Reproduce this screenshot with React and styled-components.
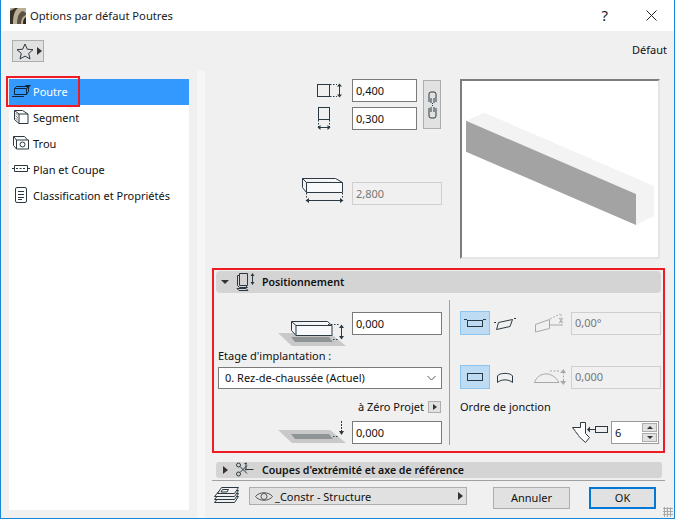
import React from "react";
import styled, { createGlobalStyle } from "styled-components";

const Global = createGlobalStyle`
  html, body { margin: 0; padding: 0; background: #f0f0f0; }
  * { box-sizing: border-box; }
`;

const INK = "#2b3a42";

const Logo = () => (
  <svg width="16" height="16" viewBox="0 0 16 16">
    <rect width="16" height="16" fill="#b9ae98" />
    <path d="M0 16V3L5 0h3C4 3 3 9 3 16z" fill="#3a3226" />
    <path d="M7 16C7 9 9 4 13 3l3 2v2c-3 1-5 4-5 9z" fill="#5c5140" />
    <path d="M13 16c0-4 1-6 3-7v7z" fill="#2f2a20" />
  </svg>
);

const Star = () => (
  <svg width="18" height="17" viewBox="0 0 18 17">
    <path d="M9 1l2.300 5.200 5.700.5-4.300 3.700 1.300 5.600L9 13.100 4 16l1.300-5.600L1 6.700l5.700-.5z" fill="none" stroke={INK} />
  </svg>
);

const BeamIcon = () => (
  <svg width="19" height="12" viewBox="0 0 19 12">
    <g fill="none" stroke="#10243a">
      <path d="M2.500 3.500h12v6h-12zM2.500 3.500l2-2h11M14.500 3.500l2-2v5l-2 3" />
      <path d="M0 11.500h12" />
    </g>
    <path d="M13 0h6l-3 4z" fill="#10243a" />
  </svg>
);

const SegmentIcon = () => (
  <svg width="15" height="14" viewBox="0 0 15 14">
    <path d="M.500.500h8l5.500 3.500v9.500H5l-4.500-4zM5 13.500V4h9M5 4L.500.500" fill="none" stroke={INK} />
    <path d="M1.500 3l2.500 2.500M1.500 5.500L4 8M1.500 8L4 10.500" stroke="#777" />
  </svg>
);

const HoleIcon = () => (
  <svg width="16" height="14" viewBox="0 0 16 14">
    <path d="M.500.500h11l3 3.500M.500.500v9l3 3.500h12V4h-12v9M.500.500L3.500 4" fill="none" stroke={INK} />
    <circle cx="9.500" cy="8.500" r="2.500" fill="none" stroke={INK} />
  </svg>
);

const PlanIcon = () => (
  <svg width="18" height="8" viewBox="0 0 18 8">
    <path d="M2.500.500h13v6h-13zM0 3.500h2.500M15.500 3.500H18" fill="none" stroke={INK} />
    <path d="M4 3.500h10" stroke={INK} strokeDasharray="2 1.500" />
  </svg>
);

const SheetIcon = () => (
  <svg width="12" height="16" viewBox="0 0 12 16">
    <rect x="0.500" y="0.500" width="11" height="15" rx="1.500" fill="none" stroke={INK} />
    <path d="M3 4.500h6M3 7.500h6M3 10.500h6M3 12.500h4" stroke={INK} />
  </svg>
);

const HeightDim = () => (
  <svg width="26" height="15" viewBox="0 0 26 15">
    <rect x="0.500" y="1.500" width="12" height="12" fill="none" stroke={INK} />
    <path d="M13 1.500h7M13 13.500h7" stroke={INK} strokeDasharray="1.500 1.500" />
    <path d="M22.500 2v11" stroke={INK} />
    <path d="M20 3.500l2.500-3 2.500 3zM20 11.500l2.500 3 2.500-3z" fill={INK} />
  </svg>
);

const WidthDim = () => (
  <svg width="14" height="23" viewBox="0 0 14 23">
    <rect x="1.500" y="0.500" width="11" height="12" fill="none" stroke={INK} />
    <path d="M1.500 13v7M12.500 13v7" stroke={INK} strokeDasharray="1.500 1.500" />
    <path d="M2 20.500h10" stroke={INK} />
    <path d="M3.500 18l-3 2.500 3 2.500zM10.500 18l3 2.500-3 2.500z" fill={INK} />
  </svg>
);

const LengthDim = () => (
  <svg width="42" height="28" viewBox="0 0 42 28">
    <path d="M4.500 5.500h36v10h-36zM.500 1.500h33l7 4M.500 1.500v9l4 5M.500 1.500l4 4" fill="#f8f9fb" stroke={INK} />
    <path d="M4.500 16v6M40.500 16v6" stroke={INK} strokeDasharray="1.500 1.500" />
    <path d="M5 23.500h35" stroke={INK} />
    <path d="M7 21l-3.500 2.500L7 26zM38 21l3.500 2.500L38 26z" fill={INK} />
  </svg>
);

const ChainIcon = () => (
  <svg width="9" height="28" viewBox="0 0 9 28">
    <path d="M1 11V3a2 2 0 012-2h3a2 2 0 012 2v8M1 17v8a2 2 0 002 2h3a2 2 0 002-2v-8" fill="none" stroke={INK} />
    <path d="M3 7v5M6 7v5M3 16v5M6 16v5" stroke={INK} />
    <path d="M4.500 12v4" stroke={INK} strokeDasharray="1 1" />
  </svg>
);

const PositionIcon = () => (
  <svg width="19" height="20" viewBox="0 0 19 20">
    <path d="M3.500 1.500h8v12h-8zM1.500 3.500h2M1.500 3.500v10l2 2h8l-2-2" fill="none" stroke={INK} />
    <path d="M1 16.500l2 2h9l-2-2z" fill="none" stroke={INK} />
    <path d="M16.500 3v8" stroke={INK} />
    <path d="M14.500 4l2-3 2 3zM14.500 10l2 3 2-3z" fill={INK} />
  </svg>
);

const ElevationIcon = () => (
  <svg width="68" height="26" viewBox="0 0 68 26">
    <path d="M0 13h52l16 13H14z" fill="#c9c9c9" />
    <path d="M13 17h38l4 5H17z" fill="#8f9496" />
    <path d="M18 5.500h36v10H18zM13.500 1.500h36l4.500 4M13.500 1.500v9l4.500 5M13.500 1.500l4.500 4" fill="#f8f9fb" stroke={INK} />
    <path d="M50 4.500h11M55 19.500h6" stroke={INK} strokeDasharray="1.500 1.500" />
    <path d="M63.500 6v12" stroke={INK} />
    <path d="M61 8l2.500-3.500L66 8zM61 16l2.500 3.500L66 16z" fill={INK} />
  </svg>
);

const ZeroIcon = () => (
  <svg width="68" height="23" viewBox="0 0 68 23">
    <path d="M0 9h52l16 13H14z" fill="#c9c9c9" />
    <path d="M13 13h38l4 5H17z" fill="#8f9496" />
    <path d="M55 15.500h6" stroke={INK} strokeDasharray="1.500 1.500" />
    <path d="M63.500 0v10" stroke={INK} strokeDasharray="2 1" />
    <path d="M61 10l2.500 4 2.500-4z" fill={INK} />
  </svg>
);

const FlatBeam = () => (
  <svg width="24" height="8" viewBox="0 0 24 8">
    <rect x="4.500" y="1.500" width="15" height="6" fill="none" stroke={INK} />
    <path d="M1 .500h3M20 .500h3" stroke={INK} />
  </svg>
);

const TiltBeam = () => (
  <svg width="22" height="13" viewBox="0 0 22 13">
    <path d="M4.500 5.500l14-3-2.500 7-13.500 3z" fill="none" stroke={INK} />
    <path d="M0 5.500h2M20 1.500h2" stroke={INK} />
  </svg>
);

const TiltDim = () => (
  <svg width="32" height="20" viewBox="0 0 32 20">
    <g fill="none" stroke="#a8a8a8">
      <path d="M1.500 11.500l14-5v9l-14 3.500zM16 12h13" />
      <path d="M16 6l10-5M27 1v11" strokeDasharray="2 1.500" />
      <path d="M25 5l4 5M29 5l-4 5" />
    </g>
  </svg>
);

const PlainBeam = () => (
  <svg width="16" height="8" viewBox="0 0 16 8">
    <rect x="0.500" y="0.500" width="15" height="7" fill="none" stroke={INK} />
  </svg>
);

const ArchBeam = () => (
  <svg width="16" height="11" viewBox="0 0 16 11">
    <path d="M.500 4C2 .500 14 .500 15.500 4v6.500C12 7 4 7 .500 10.500z" fill="none" stroke={INK} />
  </svg>
);

const ArchDim = () => (
  <svg width="32" height="16" viewBox="0 0 32 16">
    <g fill="none" stroke="#a8a8a8">
      <path d="M.500 13.500C4 3 18 1 25 13.500zM.500 13.500H25" />
      <path d="M16 2h9" strokeDasharray="2 1.500" />
      <path d="M29.500 3v10" strokeDasharray="2 1.500" />
    </g>
    <path d="M26 4l3.500-4 2.500 4zM26 12l3.500 4 2.500-4z" fill="#a8a8a8" />
  </svg>
);

const JoinIcon = () => (
  <svg width="36" height="21" viewBox="0 0 36 21">
    <path d="M.500 5.500h8v-5h5v11l4 4-4 5-5.500-5z" fill="#fff" stroke={INK} />
    <path d="M.500 5.500l7.500 10" stroke="#777" fill="none" />
    <path d="M17 7.500h6" stroke={INK} />
    <path d="M15 7.500l3-3v6z" fill={INK} />
    <rect x="23.500" y="4.500" width="12" height="6" fill="#eee" stroke={INK} />
  </svg>
);

const ScissorIcon = () => (
  <svg width="18" height="15" viewBox="0 0 18 15">
    <g fill="none" stroke={INK}>
      <circle cx="2.500" cy="3" r="2" />
      <circle cx="2.500" cy="12" r="2" />
      <path d="M4 4.500l7 7M4 10.500l7-7" />
      <path d="M8.500 1.500h2M10 .500v8M9 7.500h8.500" />
    </g>
  </svg>
);

const LayersIcon = () => (
  <svg width="26" height="17" viewBox="0 0 26 17">
    <g fill="#f0f0f0" stroke={INK}>
      <path d="M5.500 9.500h19l-4 6H.500z" />
      <path d="M5.500 6.500h19l-4 6H.500z" />
      <path d="M5.500 3.500h19l-4 6H.500z" />
      <path d="M7.500.500h17l-4 6H3.500z" />
      <path d="M8.500 2.500h6l-1.500 2.500H7z" />
    </g>
  </svg>
);

const EyeIcon = () => (
  <svg width="18" height="11" viewBox="0 0 18 11">
    <path d="M.500 5.500C4 .500 14 .500 17.500 5.500 14 10.500 4 10.500 .500 5.500z" fill="none" stroke="#555" />
    <circle cx="9" cy="5.500" r="3" fill="none" stroke="#555" />
  </svg>
);

const Caret = ({ dir = "right", size = 4 }) => (
  <CaretShape $dir={dir} $size={size} />
);

const sections = [
  { name: "Poutre", icon: <BeamIcon />, active: true },
  { name: "Segment", icon: <SegmentIcon /> },
  { name: "Trou", icon: <HoleIcon /> },
  { name: "Plan et Coupe", icon: <PlanIcon /> },
  { name: "Classification et Propriétés", icon: <SheetIcon /> },
];

const App = () => {
  return (
    <Window>
      <Global />
      <TitleBar>
        <AppLogo><Logo /></AppLogo>
        <TitleText>Options par défaut Poutres</TitleText>
        <TitleHelp>?</TitleHelp>
        <CloseIcon width="11" height="11" viewBox="0 0 11 11">
          <path d="M.500.500l10 10M10.500.500l-10 10" stroke="#222" fill="none" />
        </CloseIcon>
      </TitleBar>

      <Content>
        <TopRow>
          <FavButton>
            <Star />
            <Caret size={4} />
          </FavButton>
          <DefaultLabel>Défaut</DefaultLabel>
        </TopRow>

        <Columns>
          <SideColumn>
            <SideList>
              {sections.map((s) => (
                <SideItem key={s.name} $active={s.active}>
                  <SideIcon>{s.icon}</SideIcon>
                  {s.name}
                </SideItem>
              ))}
              <Callout />
            </SideList>
          </SideColumn>
          <Strip />

          <Panel>
            <General>
              <Sizes>
                <DimIcon $top={4} $right={9}><HeightDim /></DimIcon>
                <NumberField $w={65}>0,400</NumberField>
                <ChainButton><ChainIcon /></ChainButton>
                <DimIcon $top={0} $right={21}><WidthDim /></DimIcon>
                <NumberField $w={65}>0,300</NumberField>
                <LengthRow>
                  <LengthDim />
                  <NumberField $w={90} $off>2,800</NumberField>
                </LengthRow>
              </Sizes>
              <Preview>
                <svg width="196" height="175" viewBox="0 0 196 175">
                  <path d="M4 39.700L22.300 31.700 192 105 174 113z" fill="#f3f3f3" />
                  <path d="M4 39.700L174 113v31L4 70.700z" fill="#a3a3a3" />
                  <path d="M174 113l18-8v30l-18 9z" fill="#f3f3f3" />
                </svg>
              </Preview>
            </General>

            <PositionBox>
              <SectionHeader>
                <Caret dir="down" size={4} />
                <PositionIcon />
                Positionnement
              </SectionHeader>
              <PositionBody>
                <PositionLeft>
                  <ElevationRow>
                    <ElevationWrap><ElevationIcon /></ElevationWrap>
                    <NumberField $w={90}>0,000</NumberField>
                  </ElevationRow>
                  <FieldLabel>Etage d'implantation :</FieldLabel>
                  <StorySelect>
                    0. Rez-de-chaussée (Actuel)
                    <svg width="9" height="6" viewBox="0 0 9 6">
                      <path d="M.500 1l4 4 4-4" fill="none" stroke="#555" />
                    </svg>
                  </StorySelect>
                  <ZeroRow>
                    <ZeroText>à Zéro Projet</ZeroText>
                    <TinyButton><Caret size={3.500} /></TinyButton>
                  </ZeroRow>
                  <ElevationRow>
                    <ZeroIcon />
                    <NumberField $w={90}>0,000</NumberField>
                  </ElevationRow>
                </PositionLeft>
                <Divider />
                <PositionRight>
                  <OptionRow>
                    <OptionButton $on><FlatBeam /></OptionButton>
                    <OptionButton><TiltBeam /></OptionButton>
                    <DimGap><TiltDim /></DimGap>
                    <NumberField $w={90} $off>0,00°</NumberField>
                  </OptionRow>
                  <OptionRow $second>
                    <OptionButton $on><PlainBeam /></OptionButton>
                    <OptionButton><ArchBeam /></OptionButton>
                    <DimGap><ArchDim /></DimGap>
                    <NumberField $w={90} $off>0,000</NumberField>
                  </OptionRow>
                  <OrderLabel>Ordre de jonction</OrderLabel>
                  <StepRow>
                    <JoinIcon />
                    <Stepper>
                      <StepValue>6</StepValue>
                      <StepButtons>
                        <StepButton><Caret dir="up" size={3.500} /></StepButton>
                        <StepButton><Caret dir="down" size={3.500} /></StepButton>
                      </StepButtons>
                    </Stepper>
                  </StepRow>
                </PositionRight>
              </PositionBody>
            </PositionBox>

            <CutsHeader>
              <Caret size={4} />
              <ScissorIcon />
              Coupes d'extrémité et axe de référence
            </CutsHeader>
            <Rule />
            <Footer>
              <LayersIcon />
              <LayerSelect>
                <EyeIcon />
                <LayerName>_Constr - Structure</LayerName>
                <Caret size={4} />
              </LayerSelect>
              <CancelButton>Annuler</CancelButton>
              <OkButton>OK</OkButton>
            </Footer>
          </Panel>
        </Columns>
        <Grip />
      </Content>
    </Window>
  );
};

export default App;

const CaretShape = styled.span`
  flex: none;
  width: 0;
  height: 0;
  border-style: solid;
  border-color: transparent;
  ${(p) =>
    p.$dir === "right" &&
    `border-width: ${p.$size}px 0 ${p.$size}px ${p.$size + 1}px; border-left-color: #333;`}
  ${(p) =>
    p.$dir === "down" &&
    `border-width: ${p.$size}px ${p.$size}px 0 ${p.$size}px; border-top-color: #333;`}
  ${(p) =>
    p.$dir === "up" &&
    `border-width: 0 ${p.$size}px ${p.$size}px ${p.$size}px; border-bottom-color: #333;`}
`;

const Window = styled.div`
  width: 675px;
  height: 519px;
  display: flex;
  flex-direction: column;
  border: 1px solid #1a86d8;
  border-top: none;
  background: #f0f0f0;
  font-family: "Noto Sans", "Open Sans", sans-serif;
  font-size: 11px;
  color: #111;
  overflow: hidden;
`;

const TitleBar = styled.div`
  height: 31px;
  flex: none;
  display: flex;
  align-items: center;
  background: #fff;
  padding-left: 9px;
  padding-right: 17px;
`;

const AppLogo = styled.div`
  width: 16px;
  height: 16px;
  margin-right: 4px;
  svg {
    display: block;
  }
`;

const TitleText = styled.div`
  flex: 1;
  font-size: 11.2px;
  color: #222;
`;

const TitleHelp = styled.div`
  font-size: 15px;
  line-height: 15px;
  margin: 0 38px 1px 0;
  color: #222;
`;

const CloseIcon = styled.svg`
  display: block;
`;

const Content = styled.div`
  flex: 1;
  position: relative;
  display: flex;
  flex-direction: column;
  min-height: 0;
`;

const TopRow = styled.div`
  height: 40px;
  flex: none;
  display: flex;
  align-items: flex-start;
  justify-content: space-between;
  padding: 9px 7px 0 11px;
`;

const FavButton = styled.div`
  width: 32px;
  height: 22px;
  display: flex;
  align-items: center;
  gap: 3px;
  padding-left: 3px;
  background: #e1e1e1;
  border: 1px solid #adadad;
`;

const DefaultLabel = styled.div`
  margin-top: 2px;
  color: #111;
`;

const Columns = styled.div`
  flex: 1;
  display: flex;
  min-height: 0;
`;

const SideColumn = styled.div`
  width: 188px;
  padding: 8px 0 0 8px;
  flex: none;
`;

const SideList = styled.div`
  position: relative;
  height: 431px;
  background: #fff;
`;

const SideItem = styled.div`
  height: 26px;
  display: flex;
  align-items: center;
  padding-bottom: 2px;
  background: ${(p) => (p.$active ? "#3399ff" : "transparent")};
  color: ${(p) => (p.$active ? "#fff" : "#111")};
`;

const SideIcon = styled.div`
  width: 24px;
  display: flex;
  justify-content: center;
  align-items: center;
`;

const Callout = styled.div`
  position: absolute;
  left: -3px;
  top: -3px;
  width: 74px;
  height: 31px;
  border: 2px solid #ed1c24;
`;

const Strip = styled.div`
  width: 8px;
  margin-left: 8px;
  background: #f6f6f6;
  flex: none;
`;

const Panel = styled.div`
  width: 453px;
  margin-left: 7px;
  flex: none;
  display: flex;
  flex-direction: column;
`;

const General = styled.div`
  height: 197px;
  flex: none;
  display: flex;
  padding-top: 8px;
`;

const Sizes = styled.div`
  width: 248px;
  flex: none;
  display: grid;
  grid-template-columns: 140px 65px 1fr;
  grid-auto-rows: 23px;
  row-gap: 5px;
  align-content: start;
`;

const DimIcon = styled.div`
  display: flex;
  justify-content: flex-end;
  padding-right: ${(p) => p.$right}px;
  padding-top: ${(p) => p.$top}px;
`;

const NumberField = styled.div`
  width: ${(p) => p.$w}px;
  height: 23px;
  flex: none;
  display: flex;
  align-items: center;
  padding: 0 0 1px 3px;
  background: ${(p) => (p.$off ? "#f0f0f0" : "#fff")};
  border: 1px solid ${(p) => (p.$off ? "#cfcfcf" : "#7a7a7a")};
  color: ${(p) => (p.$off ? "#777" : "#111")};
`;

const ChainButton = styled.div`
  grid-row: 1 / span 2;
  grid-column: 3;
  width: 18px;
  height: 49px;
  margin: 1px 0 0 6px;
  display: flex;
  align-items: center;
  justify-content: center;
  background: #e1e1e1;
  border: 1px solid #adadad;
`;

const LengthRow = styled.div`
  grid-column: 1 / -1;
  margin-top: 42px;
  height: 28px;
  display: flex;
  gap: 8px;
  align-items: flex-end;
  padding-left: 90px;
`;

const Preview = styled.div`
  width: 200px;
  height: 180px;
  background: #fff;
  border: 2px solid #e4e4e4;
  border-top-color: #7d7d7d;
  border-left-color: #7d7d7d;
  overflow: hidden;
`;

const PositionBox = styled.div`
  height: 185px;
  flex: none;
  border: 2px solid #ed1c24;
  padding: 1px 2px 0;
  display: flex;
  flex-direction: column;
`;

const SectionHeader = styled.div`
  height: 22px;
  flex: none;
  display: flex;
  align-items: center;
  gap: 7px;
  padding-left: 5px;
  background: #d4d4d4;
  border-radius: 4px;
  font-weight: 600;
  font-size: 10.6px;
  color: #111;
`;

const PositionBody = styled.div`
  flex: 1;
  display: flex;
`;

const PositionLeft = styled.div`
  width: 224px;
  margin-left: 2px;
  flex: none;
  display: flex;
  flex-direction: column;
  padding-top: 19px;
`;

const ElevationRow = styled.div`
  height: 23px;
  display: flex;
  justify-content: flex-end;
  align-items: flex-start;
  gap: 6px;
`;

const ElevationWrap = styled.div`
  height: 26px;
  margin-top: 8px;
`;

const FieldLabel = styled.div`
  margin-top: 13px;
  height: 19px;
`;

const StorySelect = styled.div`
  height: 22px;
  display: flex;
  align-items: center;
  justify-content: space-between;
  padding: 0 5px 1px 6px;
  background: #fff;
  border: 1px solid #7a7a7a;
`;

const ZeroRow = styled.div`
  margin-top: 12px;
  height: 20px;
  display: flex;
  justify-content: flex-end;
  gap: 4px;
  padding-right: 1px;
  align-items: flex-start;
`;

const ZeroText = styled.div`
  line-height: 11px;
`;

const TinyButton = styled.div`
  width: 13px;
  height: 12px;
  display: flex;
  align-items: center;
  justify-content: center;
  background: #e1e1e1;
  border: 1px solid #adadad;
`;

const Divider = styled.div`
  width: 1px;
  height: 145px;
  margin: 7px 0 0 7px;
  background: #a0a0a0;
  flex: none;
`;

const PositionRight = styled.div`
  flex: 1;
  padding: 18px 0 0 10px;
  display: flex;
  flex-direction: column;
`;

const OptionRow = styled.div`
  display: flex;
  align-items: center;
  margin-top: ${(p) => (p.$second ? 30 : 0)}px;
`;

const OptionButton = styled.div`
  width: 30px;
  height: 24px;
  display: flex;
  align-items: center;
  justify-content: center;
  background: ${(p) => (p.$on ? "#bddcf4" : "transparent")};
  border: 1px solid ${(p) => (p.$on ? "#8cc4f0" : "transparent")};
`;

const DimGap = styled.div`
  width: 51px;
  display: flex;
  justify-content: flex-end;
  padding-right: 5px;
`;

const OrderLabel = styled.div`
  margin-top: 10px;
  height: 18px;
`;

const StepRow = styled.div`
  margin-top: 4px;
  display: flex;
  justify-content: flex-end;
  align-items: center;
  gap: 3px;
  padding-right: 2px;
`;

const Stepper = styled.div`
  width: 48px;
  height: 23px;
  display: flex;
  background: #fff;
  border: 1px solid #9a9a9a;
`;

const StepValue = styled.div`
  flex: 1;
  padding-left: 3px;
  display: flex;
  align-items: center;
`;

const StepButtons = styled.div`
  width: 15px;
  margin: 1px;
  display: flex;
  flex-direction: column;
  gap: 1px;
`;

const StepButton = styled.div`
  flex: 1;
  display: flex;
  align-items: center;
  justify-content: center;
  background: #e1e1e1;
  border: 1px solid #adadad;
`;

const CutsHeader = styled(SectionHeader)`
  height: 16px;
  margin: 9px 3px 0 4px;
  padding: 0 0 1px 7px;
  gap: 8px;
  border-radius: 3px;
  font-size: 10.6px;
`;

const Rule = styled.div`
  height: 1px;
  margin-top: 2px;
  background: #a0a0a0;
  flex: none;
`;

const Footer = styled.div`
  display: flex;
  align-items: flex-start;
  padding: 6px 0 0 2px;
`;

const LayerSelect = styled.div`
  width: 218px;
  height: 18px;
  margin-left: 9px;
  display: flex;
  align-items: center;
  padding: 0 3px 0 5px;
  gap: 2px;
  background: #e1e1e1;
  border: 1px solid #adadad;
`;

const LayerName = styled.div`
  flex: 1;
`;

const FooterButton = styled.div`
  height: 22px;
  display: flex;
  align-items: center;
  justify-content: center;
  background: #e1e1e1;
  padding-bottom: 1px;
`;

const CancelButton = styled(FooterButton)`
  width: 77px;
  margin-left: 26px;
  border: 1px solid #adadad;
`;

const OkButton = styled(FooterButton)`
  width: 67px;
  margin-left: 19px;
  border: 2px solid #0078d7;
`;

const Grip = styled.div`
  position: absolute;
  right: 1px;
  bottom: 1px;
  width: 10px;
  height: 10px;
  background-image: radial-gradient(#a8a8a8 1px, transparent 1.200px);
  background-size: 3px 3px;
`;
